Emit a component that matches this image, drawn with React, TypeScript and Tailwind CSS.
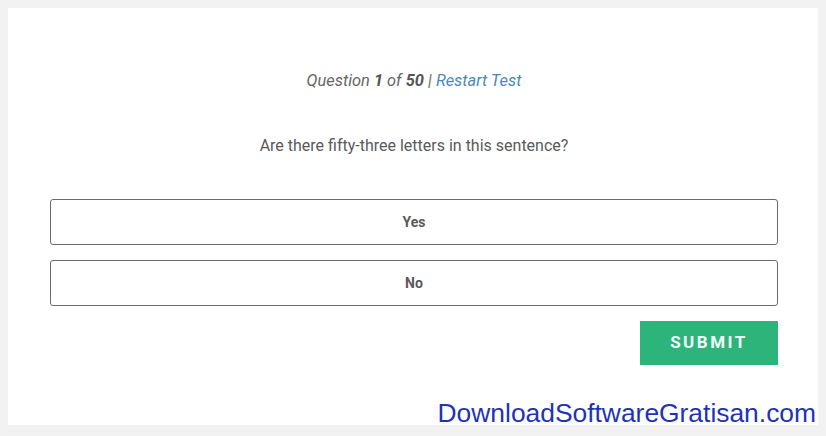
import React from "react";

export default function App() {
  return (
    <div className="relative w-[826px] h-[436px] bg-[#f2f2f2] overflow-hidden" style={{ fontFamily: "Roboto, 'Liberation Sans', sans-serif" }}>
      <div className="absolute left-[8px] top-[8px] w-[810px] h-[417px] bg-white">
        <div className="flex flex-col pl-[42px] pr-[40px] pt-[61px]">
          <p className="text-center text-[16.4px] leading-[24px] italic text-[#666]">
            Question <b className="font-bold text-[#555]">1</b> of <b className="font-bold text-[#555]">50</b> |{" "}
            <span className="text-[#4b8ab8]">Restart Test</span>
          </p>
          <p className="mt-[41px] text-center text-[16px] leading-[24px] text-[#5a5a5a]">
            Are there fifty-three letters in this sentence?
          </p>
          <div className="mt-[41px] flex flex-col gap-[15px]">
            <button className="h-[46px] w-full rounded-[3px] border border-[#6a6a6a] bg-white text-[14px] font-bold text-[#5a5a5a]">Yes</button>
            <button className="h-[46px] w-full rounded-[3px] border border-[#6a6a6a] bg-white text-[14px] font-bold text-[#5a5a5a]">No</button>
          </div>
          <div className="mt-[15px] flex justify-end">
            <button className="h-[44px] w-[138px] bg-[#2db47b] text-[17px] font-bold tracking-[2.5px] text-[#f0fff8]">SUBMIT</button>
          </div>
        </div>
      </div>
      <div className="absolute right-[10px] top-[396px] text-[26.4px] leading-[34px] text-[#1f33b8]" style={{ fontFamily: "'Liberation Sans', Arial, sans-serif" }}>
        DownloadSoftwareGratisan.com
      </div>
    </div>
  );
}
